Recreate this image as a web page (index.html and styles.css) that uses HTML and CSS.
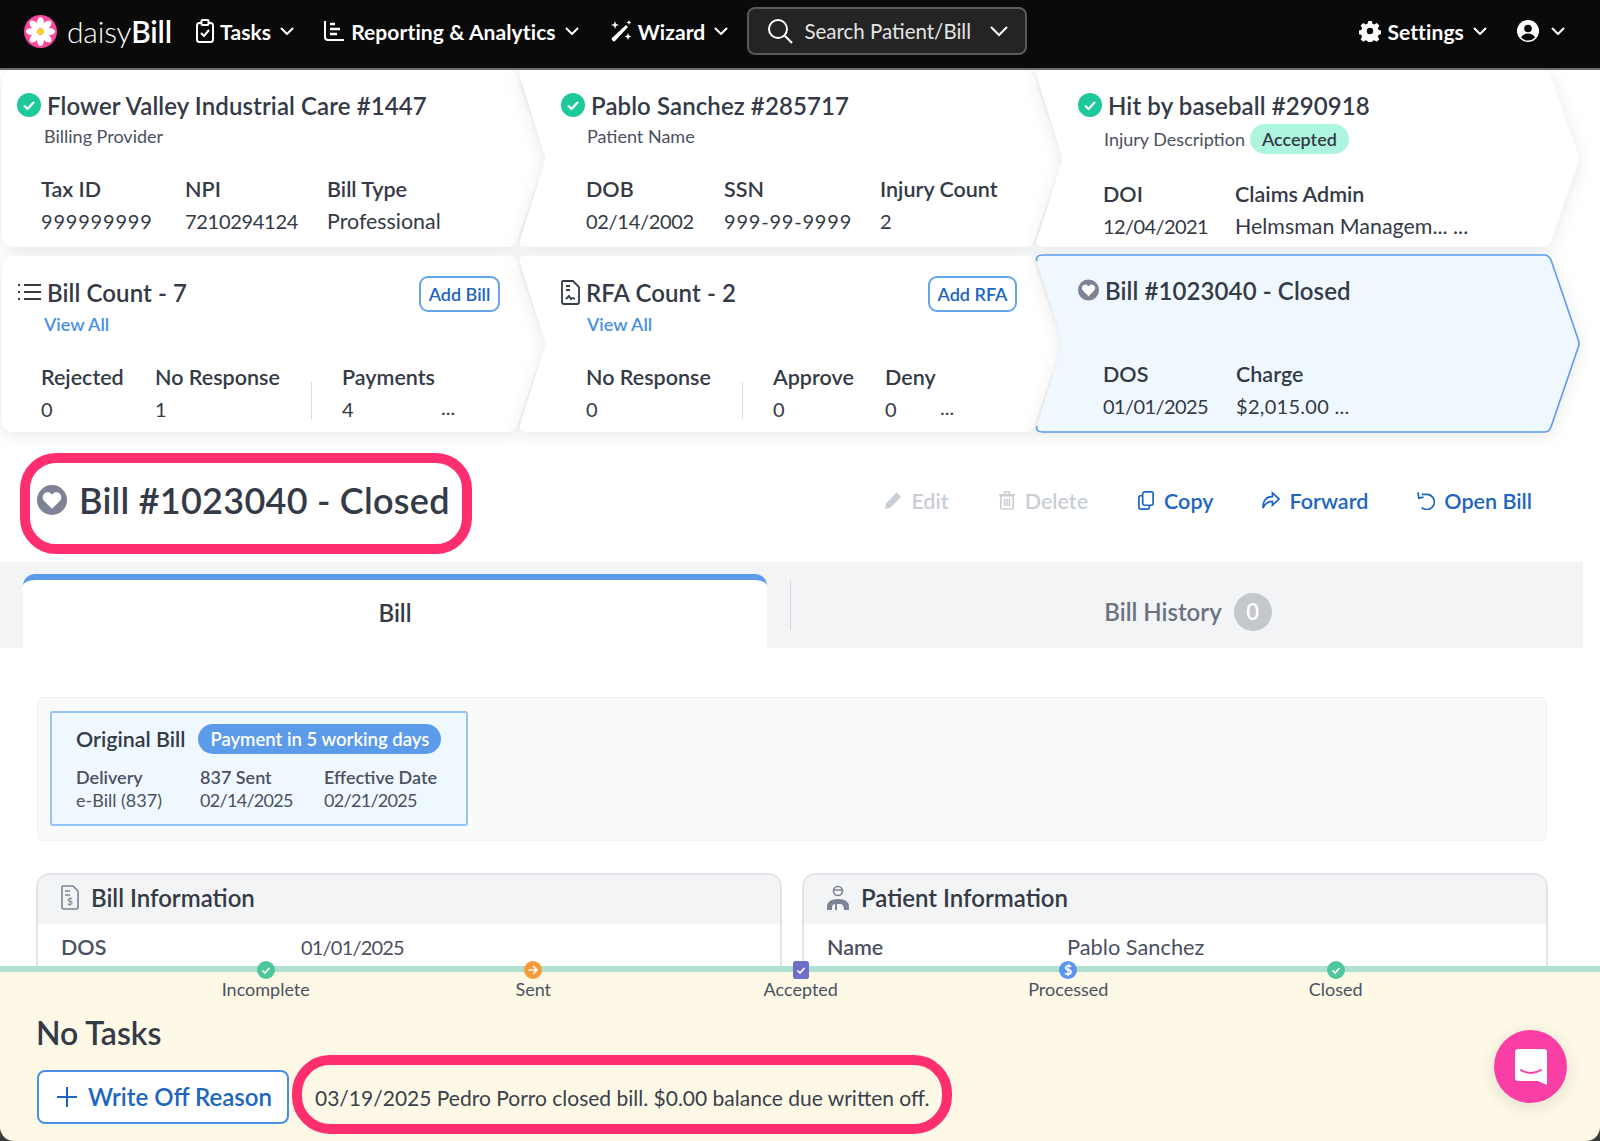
FILE: index.html
```html
<!DOCTYPE html>
<html lang="en">
<head>
    <meta charset="UTF-8">
    <title>daisyBill - Bill #1023040</title>
    <link rel="stylesheet" href="styles.css">
</head>
<body>
    <nav class="topnav">
        <div class="brand">
            <svg class="brand-logo" viewBox="0 0 34 34">
                <circle cx="17" cy="17" r="17" fill="#f8479f"/>
                <g fill="#fff">
                    <ellipse cx="17" cy="8" rx="3.6" ry="6"/>
                    <ellipse cx="17" cy="8" rx="3.6" ry="6" transform="rotate(45 17 17)"/>
                    <ellipse cx="17" cy="8" rx="3.6" ry="6" transform="rotate(90 17 17)"/>
                    <ellipse cx="17" cy="8" rx="3.6" ry="6" transform="rotate(135 17 17)"/>
                    <ellipse cx="17" cy="8" rx="3.6" ry="6" transform="rotate(180 17 17)"/>
                    <ellipse cx="17" cy="8" rx="3.6" ry="6" transform="rotate(225 17 17)"/>
                    <ellipse cx="17" cy="8" rx="3.6" ry="6" transform="rotate(270 17 17)"/>
                    <ellipse cx="17" cy="8" rx="3.6" ry="6" transform="rotate(315 17 17)"/>
                </g>
                <circle cx="17" cy="17" r="3.2" fill="#ffd21f"/>
            </svg>
            <span class="brand-name">daisy<b>Bill</b></span>
        </div>
        <a class="nav-item nav-tasks">
            <svg class="nav-icon" viewBox="0 0 18 24" fill="none" stroke="#fff" stroke-width="2"><rect x="1" y="4" width="16" height="19" rx="2.5"/><rect x="5.5" y="1" width="7" height="5" rx="1" fill="#0a0a0a"/><path d="M5 14l3 3 5-6"/></svg>
            Tasks
            <svg class="caret" viewBox="0 0 14 8"><path d="M1 1l6 6 6-6"/></svg>
        </a>
        <a class="nav-item nav-reports">
            <svg class="nav-icon" viewBox="0 0 22 22" fill="none" stroke="#fff" stroke-width="2"><path d="M2 1v16q0 3 3 3h16"/><path d="M7 4h5M7 9h10M7 14h7" stroke-width="2.4"/></svg>
            Reporting &amp; Analytics
            <svg class="caret" viewBox="0 0 14 8"><path d="M1 1l6 6 6-6"/></svg>
        </a>
        <a class="nav-item nav-wizard">
            <svg class="nav-icon" viewBox="0 0 23 23" fill="#fff"><path d="M17 5l2 2L6 21q-1 1-2 0l-1-1q-1-1 0-2z" /><path d="M6 1l1 3 3 1-3 1-1 3-1-3-3-1 3-1zM19 13l1 2.500 2.500 1-2.500 1-1 2.500-1-2.500-2.500-1 2.500-1zM20 0l.8 1.700 1.700.8-1.700.8-.8 1.700-.8-1.700-1.700-.8 1.700-.8z"/></svg>
            Wizard
            <svg class="caret" viewBox="0 0 14 8"><path d="M1 1l6 6 6-6"/></svg>
        </a>
        <div class="nav-search">
            <svg class="search-icon" viewBox="0 0 26 26" fill="none" stroke="#fff" stroke-width="2"><circle cx="11" cy="11" r="9"/><path d="M17.500 17.500L25 25"/></svg>
            <span class="search-text">Search Patient/Bill</span>
            <svg class="search-caret" viewBox="0 0 18 11"><path d="M1 1l8 8 8-8"/></svg>
        </div>
        <a class="nav-item nav-settings">
            <svg class="nav-icon" viewBox="0 0 24 24" fill="#fff"><path fill-rule="evenodd" d="M10 1h4l.7 3 2 .9 2.700-1.600 2.800 2.800-1.600 2.700.9 2 3 .7v4l-3 .7-.9 2 1.600 2.700-2.800 2.800-2.700-1.600-2 .9-.7 3h-4l-.7-3-2-.9-2.700 1.600-2.800-2.800 1.600-2.700-.9-2-3-.7v-4l3-.7.9-2-1.600-2.700 2.800-2.800 2.700 1.600 2-.9zM12 8.500a3.500 3.500 0 100 7 3.500 3.500 0 000-7z"/></svg>
            Settings
            <svg class="caret" viewBox="0 0 14 8"><path d="M1 1l6 6 6-6"/></svg>
        </a>
        <a class="nav-item nav-user">
            <svg class="nav-icon" viewBox="0 0 22 22"><circle cx="11" cy="11" r="11" fill="#fff"/><circle cx="11" cy="8.500" r="3.800" fill="#0a0a0a"/><path d="M4 17.500q2-4 7-4t7 4q-3 3-7 3t-7-3z" fill="#0a0a0a"/></svg>
            <svg class="caret" viewBox="0 0 14 8"><path d="M1 1l6 6 6-6"/></svg>
        </a>
    </nav>

    <section class="steps">
        <div class="step step-first">
            <svg class="step-shape" viewBox="0 0 545 177" preserveAspectRatio="none"><path d="M12 0H508Q513 0 515 6L542 84Q544 88.500 542 93L515 171Q513 177 508 177H12Q0 177 0 165V12Q0 0 12 0Z"/></svg>
            <div class="step-title"><svg class="check" viewBox="0 0 24 24"><circle cx="12" cy="12" r="12"/><path d="M7 12.500l3.500 3.500 6.500-7"/></svg><span class="step-name">Flower Valley Industrial Care #1447</span></div>
            <div class="step-sub">Billing Provider</div>
            <div class="facts facts-a">
                <div class="fact fact-w144"><b>Tax ID</b><span class="nines">999999999</span></div>
                <div class="fact fact-w142"><b>NPI</b><span class="date">7210294124</span></div>
                <div class="fact"><b>Bill Type</b><span class="word">Professional</span></div>
            </div>
        </div>
        <div class="step step-notch">
            <svg class="step-shape" viewBox="0 0 545 177" preserveAspectRatio="none"><path d="M8 0H509Q514 0 516 6L543 84Q545 88.500 543 93L516 171Q514 177 509 177H8Q0 177 2 170L26 93Q28 88.500 26 84L2 7Q0 0 8 0Z"/></svg>
            <div class="step-title"><svg class="check" viewBox="0 0 24 24"><circle cx="12" cy="12" r="12"/><path d="M7 12.500l3.500 3.500 6.500-7"/></svg><span class="step-name">Pablo Sanchez #285717</span></div>
            <div class="step-sub">Patient Name</div>
            <div class="facts facts-a">
                <div class="fact fact-w138"><b>DOB</b><span class="date">02/14/2002</span></div>
                <div class="fact fact-w156"><b>SSN</b><span class="nines">999-99-9999</span></div>
                <div class="fact"><b>Injury Count</b><span>2</span></div>
            </div>
        </div>
        <div class="step step-notch">
            <svg class="step-shape" viewBox="0 0 545 177" preserveAspectRatio="none"><path d="M8 0H509Q514 0 516 6L543 84Q545 88.500 543 93L516 171Q514 177 509 177H8Q0 177 2 170L26 93Q28 88.500 26 84L2 7Q0 0 8 0Z"/></svg>
            <div class="step-title"><svg class="check" viewBox="0 0 24 24"><circle cx="12" cy="12" r="12"/><path d="M7 12.500l3.500 3.500 6.500-7"/></svg><span class="step-name">Hit by baseball #290918</span></div>
            <div class="step-sub sub-c">Injury Description <span class="badge-accepted">Accepted</span></div>
            <div class="facts facts-c">
                <div class="fact fact-w132"><b>DOI</b><span class="date ones">12/04/2021</span></div>
                <div class="fact"><b>Claims Admin</b><span class="word">Helmsman Managem... ...</span></div>
            </div>
        </div>

        <div class="step step-first">
            <svg class="step-shape" viewBox="0 0 545 177" preserveAspectRatio="none"><path d="M12 0H508Q513 0 515 6L542 84Q544 88.500 542 93L515 171Q513 177 508 177H12Q0 177 0 165V12Q0 0 12 0Z"/></svg>
            <div class="step-title title-b"><svg class="list-icon" viewBox="0 0 24 18" fill="none" stroke="#343a46" stroke-width="2"><path d="M1 2h2M1 9h2M1 16h2M7 2h17M7 9h17M7 16h17"/></svg><span class="step-name">Bill Count - 7</span><a class="add-btn btn-bill">Add Bill</a></div>
            <a class="view-all">View All</a>
            <div class="facts facts-b">
                <div class="fact fact-w114"><b>Rejected</b><span>0</span></div>
                <div class="fact fact-w156"><b>No Response</b><span>1</span></div>
                <div class="fact-rule"></div>
                <div class="fact"><b>Payments</b><span>4</span></div>
                <span class="more more-bill">...</span>
            </div>
        </div>
        <div class="step step-notch">
            <svg class="step-shape" viewBox="0 0 545 177" preserveAspectRatio="none"><path d="M8 0H509Q514 0 516 6L543 84Q545 88.500 543 93L516 171Q514 177 509 177H8Q0 177 2 170L26 93Q28 88.500 26 84L2 7Q0 0 8 0Z"/></svg>
            <div class="step-title title-b"><svg class="doc-icon" viewBox="0 0 19 25" fill="none" stroke="#343a46" stroke-width="1.800"><path d="M2 1h10l6 6v15q0 2-2 2H3q-2 0-2-2V2q0-1 1-1z"/><path d="M5 6h4M5 10h4M5 19l3-3 2 3 2-1 2 1"/></svg><span class="step-name">RFA Count - 2</span><a class="add-btn btn-rfa">Add RFA</a></div>
            <a class="view-all">View All</a>
            <div class="facts facts-b">
                <div class="fact fact-w156"><b>No Response</b><span>0</span></div>
                <div class="fact-rule"></div>
                <div class="fact fact-w112"><b>Approve</b><span>0</span></div>
                <div class="fact"><b>Deny</b><span>0</span></div>
                <span class="more more-rfa">...</span>
            </div>
        </div>
        <div class="step step-notch step-active">
            <svg class="step-shape" viewBox="0 0 545 177" preserveAspectRatio="none"><path class="shape-fill" d="M8 1H509Q514 1 516 6L543 84Q545 88.500 543 93L516 171Q514 176 509 176H8Q0 176 2 170L26 93Q28 88.500 26 84L2 7Q0 1 8 1Z"/><path class="shape-line" d="M2 7Q0 1 8 1H509Q514 1 516 6L543 84Q545 88.500 543 93L516 171Q514 176 509 176H8Q0 176 2 170"/></svg>
            <div class="step-title title-active"><svg class="heart-icon" viewBox="0 0 24 24"><circle cx="12" cy="12" r="12" fill="#7d8295"/><path d="M12 19l-6.500-6.500a4 4 0 015.800-5.500l.7.8.7-.8a4 4 0 015.800 5.500z" fill="#fff"/></svg><span class="step-name">Bill #1023040 - Closed</span></div>
            <div class="facts facts-active">
                <div class="fact fact-w133"><b>DOS</b><span class="date ones">01/01/2025</span></div>
                <div class="fact"><b>Charge</b><span class="charge">$2,015.00 ...</span></div>
            </div>
        </div>
    </section>

    <header class="bill-head">
        <div class="bill-title">
            <svg class="bill-heart" viewBox="0 0 24 24"><circle cx="12" cy="12" r="12" fill="#7d8295"/><path d="M12 19l-6.500-6.500a4 4 0 015.800-5.500l.7.8.7-.8a4 4 0 015.800 5.500z" fill="#fff"/></svg>
            <h1>Bill #1023040 - Closed</h1>
        </div>
        <div class="bill-actions">
            <a class="action action-off"><svg viewBox="0 0 20 20" fill="#c9ced6"><path d="M14 1l5 5L7 18l-6 1.500L2.500 13z"/></svg>Edit</a>
            <a class="action action-off"><svg viewBox="0 0 17 20" fill="none" stroke="#c9ced6" stroke-width="1.600"><path d="M2 5h13v13q0 1-1 1H3q-1 0-1-1zM0 4h17M6 4V1h5v3M6 8v8M8.500 8v8M11 8v8"/></svg>Delete</a>
            <a class="action"><svg viewBox="0 0 17 20" fill="none" stroke="#1d66c0" stroke-width="1.800"><rect x="5" y="1" width="11" height="14" rx="2"/><path d="M5 5H3Q1 5 1 7v10q0 2 2 2h7q2 0 2-2v-2"/></svg>Copy</a>
            <a class="action"><svg viewBox="0 0 19 18" fill="none" stroke="#1d66c0" stroke-width="1.800"><path d="M11 1l7 6.500-7 6.500v-4Q4 10 1 17 1 5 11 5z"/></svg>Forward</a>
            <a class="action"><svg viewBox="0 0 19 19" fill="none" stroke="#1d66c0" stroke-width="1.800"><path d="M5 3h5a8 8 0 11-5 14"/><path d="M1 1l1 6 5-1"/></svg>Open Bill</a>
        </div>
    </header>

    <div class="tabs">
        <div class="tab tab-on">Bill</div>
        <div class="tab-rule"></div>
        <div class="tab">Bill History <span class="tab-count">0</span></div>
    </div>

    <main class="bill-body">
        <section class="delivery-panel">
            <div class="delivery-box">
                <div class="delivery-head"><span>Original Bill</span><span class="pay-pill">Payment in 5 working days</span></div>
                <div class="delivery-cols">
                    <div class="delivery-col"><b>Delivery</b><span>e-Bill (837)</span></div>
                    <div class="delivery-col"><b>837 Sent</b><span class="date">02/14/2025</span></div>
                    <div class="delivery-col"><b>Effective Date</b><span class="date">02/21/2025</span></div>
                </div>
            </div>
        </section>
        <div class="info-cards">
            <section class="info-card">
                <h2><svg class="info-icon" viewBox="0 0 18 25" fill="none" stroke="#7d8295" stroke-width="1.600"><path d="M2 1h10l5 5v16q0 2-2 2H3q-2 0-2-2V2q0-1 1-1z"/><path d="M4 6h5M4 10h5"/><text x="9" y="20" text-anchor="middle" font-size="10" fill="#7d8295" stroke="none" font-family="Lato">$</text></svg>Bill Information</h2>
                <div class="info-row"><b>DOS</b><span class="date">01/01/2025</span></div>
            </section>
            <section class="info-card">
                <h2><svg class="info-icon icon-patient" viewBox="0 0 22 25"><circle cx="11" cy="6" r="4.500" fill="none" stroke="#7d8295" stroke-width="1.600"/><path d="M7 5h8" stroke="#7d8295" stroke-width="1.600"/><path d="M0 25v-3q0-8 11-8t11 8v3z" fill="#7d8295"/><path d="M5 25v-2q0-4 3-4v6zM10 25v-6h4q3 1 3 6z" fill="#f3f4f6"/></svg>Patient Information</h2>
                <div class="info-row"><b>Name</b><span>Pablo Sanchez</span></div>
            </section>
        </div>
    </main>

    <footer class="taskbar">
        <div class="taskbar-panel">
            <div class="status-line">
                <div class="status"><svg class="status-dot" viewBox="0 0 18 18"><circle cx="9" cy="9" r="9" fill="#4fc79d"/><path d="M5.500 9.500l2.500 2.500 4.500-5" fill="none" stroke="#fff" stroke-width="1.600"/></svg><span>Incomplete</span></div>
                <div class="status"><svg class="status-dot" viewBox="0 0 18 18"><circle cx="9" cy="9" r="9" fill="#f69a3c"/><path d="M4.500 9h8M9 5l4 4-4 4" fill="none" stroke="#fff" stroke-width="1.600"/></svg><span>Sent</span></div>
                <div class="status"><svg class="status-dot" viewBox="0 0 18 18"><rect width="16" height="18" x="1" rx="2.500" fill="#6f6fc9"/><path d="M5.500 9.500l2.500 2.500 4.500-5" fill="none" stroke="#fff" stroke-width="1.600"/></svg><span>Accepted</span></div>
                <div class="status"><svg class="status-dot" viewBox="0 0 18 18"><circle cx="9" cy="9" r="9" fill="#5b94ee"/><text x="9" y="14" text-anchor="middle" font-size="14" font-weight="700" fill="#fff" font-family="Lato">$</text></svg><span>Processed</span></div>
                <div class="status"><svg class="status-dot" viewBox="0 0 18 18"><circle cx="9" cy="9" r="9" fill="#4fc79d"/><path d="M5.500 9.500l2.500 2.500 4.500-5" fill="none" stroke="#fff" stroke-width="1.600"/></svg><span>Closed</span></div>
            </div>
            <h3 class="no-tasks">No Tasks</h3>
            <div class="task-row">
                <a class="write-off"><svg viewBox="0 0 20 20" fill="none" stroke="#1d66c0" stroke-width="2"><path d="M10 0v20M0 10h20"/></svg>Write Off Reason</a>
                <div class="closed-note">03/19/2025 Pedro Porro closed bill. $0.00 balance due written off.</div>
            </div>
            <a class="chat-bubble"><svg viewBox="0 0 32 36"><path d="M3 0H29Q32 0 32 3V36L23 32H3Q0 32 0 29V3Q0 0 3 0Z" fill="#fff"/><path d="M6 21q10 6 20 0" fill="none" stroke="#f93fa6" stroke-width="2" stroke-linecap="round"/></svg></a>
        </div>
    </footer>
</body>
</html>
```

FILE: styles.css
```css
* {
    margin: 0;
    padding: 0;
    box-sizing: border-box;
}

html, body {
    height: 100%;
}

body {
    width: 1600px;
    height: 1141px;
    position: relative;
    overflow: hidden;
    background: #fff;
    color: #343a46;
    font-family: Lato, "Open Sans", sans-serif;
}

b {
    font-weight: 600;
}

/* top nav */
.topnav {
    height: 70px;
    background: #0a0a0a;
    border-bottom: 2px solid #6b6b6b;
    display: flex;
    align-items: center;
    padding: 0 0 6px 24px;
    color: #fff;
}

.brand {
    display: flex;
    align-items: center;
    width: 172px;
}

.brand-logo {
    width: 33px;
    height: 33px;
    margin-right: 10px;
}

.brand-name {
    font-size: 30px;
    font-weight: 300;
    letter-spacing: -0.2px;
}

.brand-name b {
    font-weight: 600;
}

.nav-item {
    display: flex;
    align-items: center;
    font-size: 21px;
    font-weight: 700;
    letter-spacing: 0.1px;
    white-space: nowrap;
}

.nav-icon {
    margin-right: 6px;
}

.caret {
    width: 14px;
    height: 8px;
    margin-left: 9px;
    fill: none;
    stroke: #fff;
    stroke-width: 2;
}

.nav-tasks .nav-icon { width: 18px; height: 24px; }
.nav-reports { margin-left: 29px; }
.nav-reports .nav-icon { width: 22px; height: 22px; }
.nav-wizard { margin-left: 30px; }
.nav-wizard .nav-icon { width: 23px; height: 23px; }

.nav-search {
    width: 280px;
    height: 48px;
    margin-left: 19px;
    background: #242424;
    border: 2px solid #5a5a5a;
    border-radius: 8px;
    display: flex;
    align-items: center;
    padding-left: 18px;
    font-size: 20.500px;
    color: #e4e4e4;
}

.search-icon {
    width: 26px;
    height: 26px;
    margin-right: 11px;
}

.search-text {
    width: 186px;
    white-space: nowrap;
}

.search-caret {
    width: 18px;
    height: 11px;
    fill: none;
    stroke: #fff;
    stroke-width: 2;
}

.nav-settings { margin-left: 332px; }
.nav-settings .nav-icon { width: 22px; height: 22px; }
.nav-user { margin-left: 30px; }
.nav-user .nav-icon { width: 22px; height: 22px; margin-right: 3px; }

/* chevron cards */
.steps {
    display: grid;
    grid-template-columns: 516px 517px 516px;
    grid-template-rows: 177px 176px;
    row-gap: 9px;
    padding-left: 2px;
}

.step {
    position: relative;
    width: 545px;
    padding: 23px 0 0 16px;
}

.step-notch {
    padding-left: 43px;
}

.step-shape {
    position: absolute;
    left: 0;
    top: 0;
    width: 545px;
    height: 100%;
    z-index: -1;
    fill: #fff;
    overflow: visible;
    filter: drop-shadow(0 3px 8px rgba(20, 30, 50, 0.1));
}

.step-active .step-shape {
    top: -2px;
    height: calc(100% + 3px);
}

.shape-fill {
    fill: #f0f8ff;
}

.shape-line {
    fill: none;
    stroke: #5b9bea;
    stroke-width: 1.600;
    vector-effect: non-scaling-stroke;
}

.step-title {
    display: flex;
    align-items: center;
    height: 24px;
}

.step-first .step-title {
    margin-left: -1px;
}

.check {
    width: 24px;
    height: 24px;
    margin-right: 6px;
    flex: none;
    fill: #1fc89a;
}

.check path {
    fill: none;
    stroke: #fff;
    stroke-width: 2.200;
}

.step-name {
    font-size: 24px;
    font-weight: 600;
    letter-spacing: 0.1px;
    white-space: nowrap;
}

.step-sub {
    font-size: 18px;
    color: #4b5160;
    margin: 8px 0 0 26px;
    height: 22px;
    white-space: nowrap;
}

.sub-c {
    display: flex;
    align-items: center;
    height: 30px;
    margin-top: 7px;
    gap: 5px;
}

.badge-accepted {
    background: #aef5e0;
    color: #343a46;
    border-radius: 15px;
    height: 30px;
    line-height: 30px;
    padding: 0 12px;
    font-weight: 600;
}

.facts {
    display: flex;
    margin-left: 23px;
    position: relative;
}

.facts-a { margin-top: 30px; }
.facts-c { margin-top: 28px; }
.facts-b { margin-top: 30px; }
.facts-active { margin-top: 60px; }
.step-notch .facts { margin-left: 25px; }

.fact {
    display: flex;
    flex-direction: column;
    font-size: 20px;
    gap: 8px;
    white-space: nowrap;
}

.fact b {
    font-size: 21.500px;
    font-weight: 600;
    line-height: 24px;
}

.fact span {
    line-height: 24px;
}

.fact .date { letter-spacing: -0.3px; }
.fact .ones { letter-spacing: -0.6px; }
.fact .nines { letter-spacing: 0.8px; }
.fact .charge { letter-spacing: 0.3px; }
.fact .word { font-size: 21.400px; }

.fact-w144 { width: 144px; }
.fact-w142 { width: 142px; }
.fact-w138 { width: 138px; }
.fact-w156 { width: 156px; }
.fact-w132 { width: 132px; }
.fact-w133 { width: 133px; }
.fact-w114 { width: 114px; }
.fact-w112 { width: 112px; }

.fact-rule {
    width: 1px;
    height: 37px;
    background: #d9dbe0;
    margin: 17px 30px 0 0;
}

.more {
    position: absolute;
    bottom: 2px;
    font-size: 20px;
}

.more-bill { left: 400px; }
.more-rfa { left: 354px; }

.title-b {
    margin-top: 1px;
}

.title-b .step-name {
    margin-left: 6px;
}

.list-icon {
    width: 24px;
    height: 18px;
}

.doc-icon {
    width: 19px;
    height: 25px;
}

.add-btn {
    border: 2px solid #63a4ee;
    border-radius: 9px;
    background: #fff;
    color: #1d66c0;
    font-size: 18px;
    font-weight: 600;
    height: 36px;
    line-height: 32px;
    text-align: center;
    margin-top: 3px;
}

.btn-bill {
    width: 81px;
    margin-left: auto;
    margin-right: 47px;
}

.btn-rfa {
    width: 89px;
    margin-left: auto;
    margin-right: 46px;
}

.view-all {
    display: block;
    margin: 9px 0 0 26px;
    font-size: 18px;
    font-weight: 600;
    color: #4a90e2;
    height: 22px;
}

.title-active {
    margin-top: -1px;
}

.heart-icon {
    width: 21px;
    height: 22px;
    margin-right: 6px;
}

/* page head */
.bill-head {
    display: flex;
    align-items: center;
    justify-content: space-between;
    padding: 21px 68px 0 20px;
}

.bill-title {
    width: 452px;
    height: 101px;
    border: 10px solid #ff2e6e;
    border-radius: 36px;
    display: flex;
    align-items: center;
    padding: 0 0 7px 7px;
}

.bill-heart {
    width: 30px;
    height: 30px;
    margin-right: 12px;
}

.bill-title h1 {
    font-size: 36px;
    font-weight: 600;
    letter-spacing: 0.25px;
    white-space: nowrap;
}

.bill-actions {
    display: flex;
    gap: 49px;
    padding-bottom: 6px;
}

.action {
    display: flex;
    align-items: center;
    gap: 9px;
    font-size: 21.500px;
    font-weight: 600;
    color: #1d66c0;
}

.action svg {
    width: 18px;
    height: 19px;
}

.action-off {
    color: #c9ced6;
}

/* tabs */
.tabs {
    width: 1583px;
    height: 86px;
    margin-top: 8px;
    background: #f3f4f6;
    display: flex;
    align-items: flex-end;
    padding-left: 23px;
}

.tab {
    flex: 1;
    height: 75px;
    display: flex;
    align-items: center;
    justify-content: center;
    gap: 12px;
    font-size: 24px;
    font-weight: 600;
    color: #6b7280;
    padding: 2px 0 0 2px;
}

.tab-on {
    flex: none;
    width: 744px;
    height: 74px;
    background: #fff;
    color: #343a46;
    border-top: 6px solid #5b9bea;
    border-radius: 12px 12px 0 0;
    padding: 0 0 4px;
}

.tab-rule {
    width: 1px;
    height: 50px;
    background: #d5d7dc;
    margin: 0 0 18px 23px;
}

.tab-count {
    width: 38px;
    height: 38px;
    border-radius: 50%;
    background: #c4c7cc;
    color: #fff;
    font-size: 22px;
    display: flex;
    align-items: center;
    justify-content: center;
}

/* bill body */
.bill-body {
    padding: 49px 53px 0 36px;
}

.delivery-panel {
    height: 144px;
    background: #fafafa;
    border: 1px solid #f1f1f3;
    border-radius: 6px;
    padding: 13px 12px;
    margin-left: 1px;
}

.delivery-box {
    width: 418px;
    height: 115px;
    background: #f0f8ff;
    border: 2px solid #93c5fb;
    border-radius: 3px;
    padding: 11px 0 0 24px;
}

.delivery-head {
    display: flex;
    align-items: center;
    gap: 13px;
    font-size: 21.400px;
    font-weight: 600;
}

.pay-pill {
    height: 30px;
    line-height: 30px;
    padding: 0 12px;
    background: #5b9bea;
    color: #fff;
    border-radius: 15px;
    font-size: 18.500px;
}

.delivery-cols {
    display: flex;
    margin-top: 12px;
}

.delivery-col {
    width: 124px;
    display: flex;
    flex-direction: column;
    font-size: 18px;
    color: #4b5160;
    line-height: 23px;
    white-space: nowrap;
}

.delivery-col .date {
    letter-spacing: -0.7px;
}

.info-cards {
    display: grid;
    grid-template-columns: 746px 746px;
    gap: 20px;
    margin-top: 32px;
}

.info-card {
    border: 2px solid #e3e4e8;
    border-radius: 14px 14px 0 0;
    height: 200px;
    overflow: hidden;
}

.info-card h2 {
    height: 49px;
    background: #f3f4f6;
    display: flex;
    align-items: center;
    padding: 0 0 4px 23px;
    font-size: 24px;
    font-weight: 600;
}

.info-icon {
    width: 18px;
    height: 25px;
    margin-right: 12px;
}

.icon-patient {
    width: 22px;
}

.info-row {
    display: flex;
    padding: 10px 0 0 23px;
    font-size: 21.800px;
    line-height: 26px;
    color: #4b5160;
}

.info-row b {
    font-size: 21.500px;
    width: 240px;
}

.info-row .date {
    font-size: 20px;
    letter-spacing: -0.8px;
}

/* bottom bar */
.taskbar {
    position: absolute;
    left: 0;
    right: 0;
    bottom: 0;
    height: 175px;
    background: linear-gradient(transparent 150px, #3a3a3a 150px);
}

.taskbar-panel {
    height: 100%;
    background: #fef9e7;
    border-top: 6px solid #b0e0ce;
    border-radius: 0 0 14px 14px;
    padding-left: 36px;
    position: relative;
}

.status-line {
    display: flex;
    margin: -11px 0 0 96px;
}

.status {
    width: 267.500px;
    display: flex;
    flex-direction: column;
    align-items: center;
    font-size: 18px;
    color: #4b5160;
    height: 40px;
    line-height: 20px;
}

.status-dot {
    width: 18px;
    height: 18px;
    flex: none;
}

.no-tasks {
    font-size: 32px;
    font-weight: 600;
    margin-top: 13px;
    line-height: 38px;
}

.task-row {
    display: flex;
    align-items: center;
    gap: 3px;
    margin: 3px 0 0 1px;
}

.write-off {
    width: 252px;
    height: 54px;
    margin-top: 4px;
    background: #fff;
    border: 2px solid #4a90e2;
    border-radius: 8px;
    display: flex;
    align-items: center;
    padding-left: 18px;
    gap: 11px;
    font-size: 24px;
    font-weight: 600;
    color: #1d66c0;
    white-space: nowrap;
}

.write-off svg {
    width: 20px;
    height: 20px;
}

.closed-note {
    width: 660px;
    height: 79px;
    border: 10px solid #ff2e6e;
    border-radius: 38px;
    display: flex;
    align-items: center;
    padding: 5px 0 0 13px;
    font-size: 21px;
    color: #3a3f4a;
    white-space: nowrap;
}

.chat-bubble {
    position: absolute;
    left: 1494px;
    top: 58px;
    width: 73px;
    height: 73px;
    border-radius: 50%;
    background: #f93fa6;
    box-shadow: 0 4px 18px rgba(0, 0, 0, 0.12);
    display: flex;
    align-items: center;
    justify-content: center;
}

.chat-bubble svg {
    width: 32px;
    height: 36px;
}
```
